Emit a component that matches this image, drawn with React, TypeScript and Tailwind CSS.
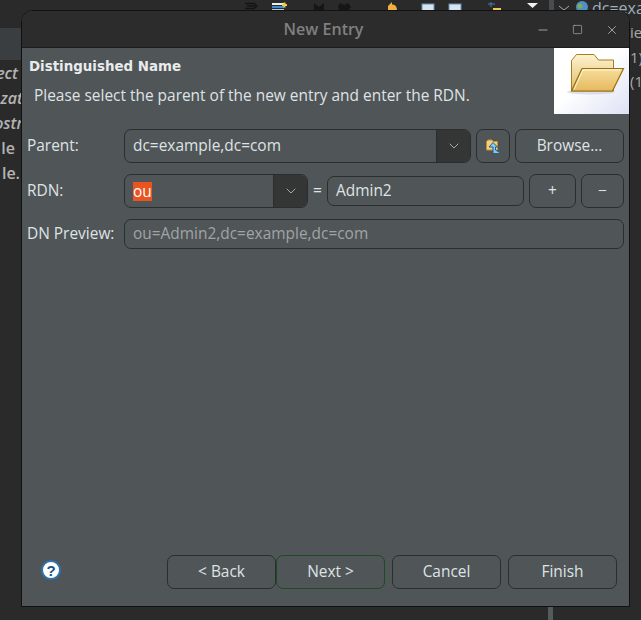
import React from 'react';
import { ChevronDown, Minus, Square, X } from 'lucide-react';

const fieldText = "font-['Open_Sans',sans-serif] text-[15.45px] text-[#dfe3e4]";

function FolderBanner() {
  return (
    <svg width="75" height="66" viewBox="0 0 75 66" className="block">
      <defs>
        <linearGradient id="bannerBg" x1="0" y1="0" x2="1" y2="1">
          <stop offset="0.45" stopColor="#ffffff" />
          <stop offset="1" stopColor="#dde1f4" />
        </linearGradient>
        <linearGradient id="backFolder" x1="0" y1="0" x2="0" y2="1">
          <stop offset="0" stopColor="#fdf3cf" />
          <stop offset="1" stopColor="#e2bc68" />
        </linearGradient>
        <linearGradient id="frontFolder" x1="0" y1="0" x2="0" y2="1">
          <stop offset="0" stopColor="#f6dd9c" />
          <stop offset="1" stopColor="#e6b95e" />
        </linearGradient>
      </defs>
      <rect width="75" height="66" fill="url(#bannerBg)" />
      <ellipse cx="37" cy="44" rx="24" ry="2.5" fill="#c9cbe0" opacity="0.6" />
      <path d="M17.5 43V12.5L22.500 6.500H40L44.500 12H59.500V43Z" fill="url(#backFolder)" stroke="#a67c1e" strokeWidth="1" />
      <path d="M17.500 43L28 20.500H69.500L58.500 43Z" fill="url(#frontFolder)" stroke="#96700f" strokeWidth="1.2" />
      <path d="M20 41.500L29 22H66" fill="none" stroke="#fdf6dc" strokeWidth="1" />
    </svg>
  );
}

function ParentIcon() {
  return (
    <svg width="16" height="16" viewBox="0 0 16 16">
      <path d="M1.500 12V3.500L3 2H7L8 3.500H12.500V12Z" fill="#f1cf85" stroke="#c58f2c" />
      <path d="M8 4.500L12.500 9H10.500V12L14.500 14.500V15.500H8V9H4Z" fill="#8cc7e8" stroke="#1f5f99" strokeWidth="1" />
    </svg>
  );
}

function HelpIcon() {
  return (
    <div className="mt-[5px] flex h-[20px] w-[20px] items-center justify-center rounded-full border-2 border-[#2f72ad] bg-white font-['Liberation_Sans',sans-serif] text-[15px] leading-none font-bold text-[#1e4f82]">
      ?
    </div>
  );
}

function Combo({ width, children }: { width: string; children: React.ReactNode }) {
  return (
    <div className={`flex h-[34px] overflow-hidden rounded-[7px] border border-[#2b2e2f] ${width}`}>
      <div className="flex min-w-0 flex-1 items-center pl-[8px]">{children}</div>
      <div className="flex w-[34px] items-center justify-center border-l border-[#2b2e2f] bg-[#343535]">
        <ChevronDown size={16} strokeWidth={1.2} className="text-[#c5c8c8]" />
      </div>
    </div>
  );
}

function Btn({ width, green, children }: { width: string; green?: boolean; children: React.ReactNode }) {
  return (
    <div
      className={`flex h-[34px] items-center justify-center rounded-[7px] border ${fieldText} ${width} ${
        green ? 'border-[#1d4a22]' : 'border-[#2b2e2f]'
      }`}
    >
      {children}
    </div>
  );
}

function Background() {
  return (
    <div className="absolute inset-0 overflow-hidden bg-[#2a2a2a]">
      <div className="absolute top-[28px] left-0 h-[32px] w-[22px] bg-[#3a3e40]" />
      <div className="absolute top-0 left-[549px] h-[11px] w-[5px] bg-[#4a4d4f]" />
      <div className="absolute top-[606px] left-[548px] h-[14px] w-[5px] bg-[#555a5c]" />
      <svg width="641" height="11" className="absolute top-0 left-0">
        <path d="M245 3.500h9l3 2.500-3 2.500h-9M247 6h8" fill="none" stroke="#141414" strokeWidth="1.4" />
        <rect x="272" y="3" width="12" height="2" fill="#e6eef6" />
        <rect x="272" y="6" width="12" height="2" fill="#3f8cc9" />
        <rect x="272" y="9" width="12" height="2" fill="#a9cbe6" />
        <path d="M282 5h5M284.500 2.500v5" stroke="#f5c842" strokeWidth="2" />
        <path d="M314 3l5 4 5-4v8h-10Z" fill="#161616" />
        <path d="M340 3l4 2 4-2 3 4-3 4h-8l-2-4Z" fill="#161616" />
        <path d="M388 6l4-4v2.500c3 0 5 2 5 6h-9Z" fill="#f0b040" />
        <rect x="422" y="4" width="12" height="7" fill="#d8e4f0" stroke="#6a8fb5" />
        <rect x="449" y="4" width="12" height="7" fill="#d8e4f0" stroke="#6a8fb5" />
        <path d="M488 4h7M491 2v5" stroke="#3f7fb8" strokeWidth="1" />
        <path d="M493 8h8v3h-8Z" fill="#f0c85a" />
        <path d="M527 3h11l-5.500 5Z" fill="#f2f2f2" />
        <path d="M559 6l5 4 5-4" fill="none" stroke="#a8a8a8" strokeWidth="1" />
        <circle cx="582" cy="7" r="6" fill="#4f8fc4" />
        <circle cx="580" cy="6" r="2.500" fill="#7cae5a" />
      </svg>
      <div className="absolute top-[-4px] left-[592px] font-['Open_Sans',sans-serif] text-[16px] leading-[24px] whitespace-nowrap text-[#9fb0bd]">dc=exa</div>
      <div className="absolute top-[22px] left-[630px] font-['Open_Sans',sans-serif] text-[15px] leading-[20px] text-[#a8a8a8]">ie</div>
      <div className="absolute top-[47px] left-[630px] font-['Open_Sans',sans-serif] text-[15px] leading-[20px] text-[#a8a8a8]">1)</div>
      <div className="absolute top-[71px] left-[630px] font-['Open_Sans',sans-serif] text-[15px] leading-[20px] text-[#a8a8a8]">(1</div>
      <div className="absolute top-[61px] right-[619px] flex flex-col items-end font-['Open_Sans',sans-serif] text-[16px] leading-[25px] font-semibold text-[#b4b4b4] italic">
        <span className="pr-[4px] whitespace-nowrap">ect</span>
        <span className="mr-[-1px] whitespace-nowrap">zat</span>
        <span className="mr-[-1px] whitespace-nowrap">ostr</span>
        <span className="pr-[7px] whitespace-nowrap not-italic">le</span>
        <span className="pr-[2px] whitespace-nowrap not-italic">le.</span>
      </div>
    </div>
  );
}

export default function App() {
  return (
    <div className="relative h-[620px] w-[641px] overflow-hidden">
      <Background />
      <div className="absolute top-[10px] left-[21px] flex h-[597px] w-[609px] flex-col overflow-hidden rounded-t-[12px] border border-[#111111] bg-[#505558]">
        <div className="relative flex h-[37px] shrink-0 items-center justify-center border-b border-[#1c1c1c] bg-[#2c2c2c]">
          <span className="mr-[4px] font-['Open_Sans',sans-serif] text-[16px] font-semibold text-[#808080]">New Entry</span>
          <div className="absolute top-0 right-0 flex h-full items-center gap-[22px] pt-[1px] pr-[10px] text-[#c4c4c4]">
            <Minus size={14} strokeWidth={1.3} />
            <Square size={11} strokeWidth={1.3} />
            <X size={14} strokeWidth={1.3} />
          </div>
        </div>

        <div className="flex h-[66px] shrink-0 justify-between">
          <div className="pt-[10px] pl-[7px]">
            <div className="font-['DejaVu_Sans',sans-serif] text-[13.4px] leading-[17px] font-bold text-[#e9ecec]">Distinguished Name</div>
            <div className={`pt-[10px] pl-[5px] leading-[20px] ${fieldText}`}>Please select the parent of the new entry and enter the RDN.</div>
          </div>
          <FolderBanner />
        </div>

        <div className="flex flex-col gap-[11px] pt-[15px] pr-[5px] pl-[5px]">
          <div className="flex items-center">
            <div className={`w-[97px] ${fieldText}`}>Parent:</div>
            <Combo width="w-[347px]">
              <span className={fieldText}>dc=example,dc=com</span>
            </Combo>
            <Btn width="w-[34px] ml-[5px]"><ParentIcon /></Btn>
            <Btn width="w-[109px] ml-[5px]">Browse...</Btn>
          </div>
          <div className="flex items-center">
            <div className={`w-[97px] ${fieldText}`}>RDN:</div>
            <Combo width="w-[184px]">
              <span className={`bg-[#e95420] leading-[19px] ${fieldText} text-white`}>ou</span>
            </Combo>
            <div className={`w-[19px] text-center ${fieldText}`}>=</div>
            <div className={`flex h-[30px] w-[197px] items-center rounded-[7px] border border-[#2b2e2f] pl-[8px] ${fieldText}`}>Admin2</div>
            <Btn width="w-[47px] ml-[5px]">+</Btn>
            <Btn width="w-[43px] ml-[5px]">−</Btn>
          </div>
          <div className="flex items-center">
            <div className={`w-[97px] ${fieldText}`}>DN Preview:</div>
            <div className="flex h-[30px] w-[500px] items-center rounded-[7px] border border-[#2b2e2f] pl-[8px] font-['Open_Sans',sans-serif] text-[15.45px] text-[#a0a4a5]">
              ou=Admin2,dc=example,dc=com
            </div>
          </div>
        </div>

        <div className="mt-auto flex items-start pr-[12px] pb-[17px] pl-[19px]">
          <HelpIcon />
          <div className="ml-auto flex items-center">
            <Btn width="w-[109px]">&lt; Back</Btn>
            <Btn width="w-[109px]" green>Next &gt;</Btn>
            <Btn width="w-[109px] ml-[7px]">Cancel</Btn>
            <Btn width="w-[109px] ml-[7px]">Finish</Btn>
          </div>
        </div>
      </div>
    </div>
  );
}
